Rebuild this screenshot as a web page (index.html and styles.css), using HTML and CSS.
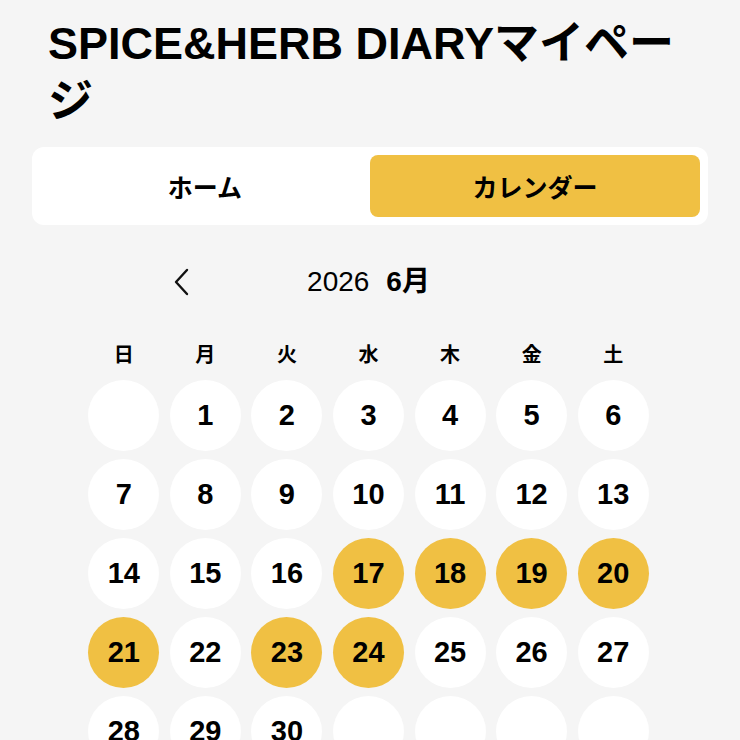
FILE: index.html
```html
<!DOCTYPE html>
<html lang="ja">
<head>
<meta charset="utf-8">
<title>SPICE&amp;HERB DIARY マイページ</title>
<link rel="stylesheet" href="styles.css">
</head>
<body>
<main class="page">
  <h1 class="title">SPICE&amp;HERB DIARYマイページ</h1>
  <nav class="tabs">
    <button class="tab">ホーム</button>
    <button class="tab active">カレンダー</button>
  </nav>
  <section class="calendar">
    <div class="cal-head">
      <button class="nav-btn" aria-label="前の月">
        <svg viewBox="0 0 16 28" width="16" height="28"><polyline points="14,2 3,14 14,26" fill="none" stroke="#111" stroke-width="2.4" stroke-linecap="round" stroke-linejoin="round"/></svg>
      </button>
      <div class="month"><span class="year">2026</span><span class="mon">6月</span></div>
      <span class="nav-space"></span>
    </div>
    <div class="weekdays">
      <span>日</span><span>月</span><span>火</span><span>水</span><span>木</span><span>金</span><span>土</span>
    </div>
    <div class="days">
      <span class="day"></span>
      <span class="day">1</span><span class="day">2</span><span class="day">3</span><span class="day">4</span><span class="day">5</span><span class="day">6</span>
      <span class="day">7</span><span class="day">8</span><span class="day">9</span><span class="day">10</span><span class="day">11</span><span class="day">12</span><span class="day">13</span>
      <span class="day">14</span><span class="day">15</span><span class="day">16</span><span class="day on">17</span><span class="day on">18</span><span class="day on">19</span><span class="day on">20</span>
      <span class="day on">21</span><span class="day">22</span><span class="day on">23</span><span class="day on">24</span><span class="day">25</span><span class="day">26</span><span class="day">27</span>
      <span class="day">28</span><span class="day">29</span><span class="day">30</span><span class="day"></span><span class="day"></span><span class="day"></span><span class="day"></span>
    </div>
  </section>
</main>
</body>
</html>
```
FILE: styles.css
```css
html, body {
  margin: 0;
  background: #f5f5f5;
  overflow: hidden;
}

body {
  font-family: "Liberation Sans", "Noto Sans CJK JP", sans-serif;
  color: #000;
}

.page {
  width: 676px;
  padding: 15px 32px 0;
}

.title {
  margin: 0 16px;
  font-size: 45px;
  line-height: 58px;
  font-weight: 700;
}

.tabs {
  margin-top: 16px;
  background: #fff;
  border-radius: 12px;
  padding: 8px;
  display: grid;
  grid-template-columns: 1fr 1fr;
}

.tab {
  height: 62px;
  border: 0;
  border-radius: 8px;
  background: transparent;
  font: 700 25px "Liberation Sans", "Noto Sans CJK JP", sans-serif;
  color: #000;
}

.tab.active {
  background: #f0c043;
}

.calendar {
  width: 571px;
  margin-left: 51px;
}

.cal-head {
  width: 420px;
  height: 44px;
  margin: 35px auto 0;
  display: grid;
  grid-template-columns: 44px 1fr 44px;
  align-items: center;
}

.nav-btn {
  width: 44px;
  height: 44px;
  padding: 0;
  border: 0;
  background: transparent;
  display: flex;
  align-items: center;
  justify-content: center;
}

.month {
  text-align: center;
  font-size: 28px;
  line-height: 44px;
}

.year {
  font-weight: 400;
}

.mon {
  font-weight: 700;
  margin-left: 17px;
}

.weekdays {
  margin-top: 38px;
  display: grid;
  grid-template-columns: repeat(7, 1fr);
  text-align: center;
  font-family: "Noto Sans CJK JP", sans-serif;
  font-size: 20px;
  font-weight: 700;
  line-height: 24px;
}

.days {
  margin-top: 14px;
  display: grid;
  grid-template-columns: repeat(7, 1fr);
  row-gap: 8px;
}

.day {
  justify-self: center;
  width: 71px;
  height: 71px;
  border-radius: 50%;
  background: #fff;
  display: flex;
  align-items: center;
  justify-content: center;
  font-size: 29px;
  font-weight: 700;
}

.day.on {
  background: #f0c043;
}
```
